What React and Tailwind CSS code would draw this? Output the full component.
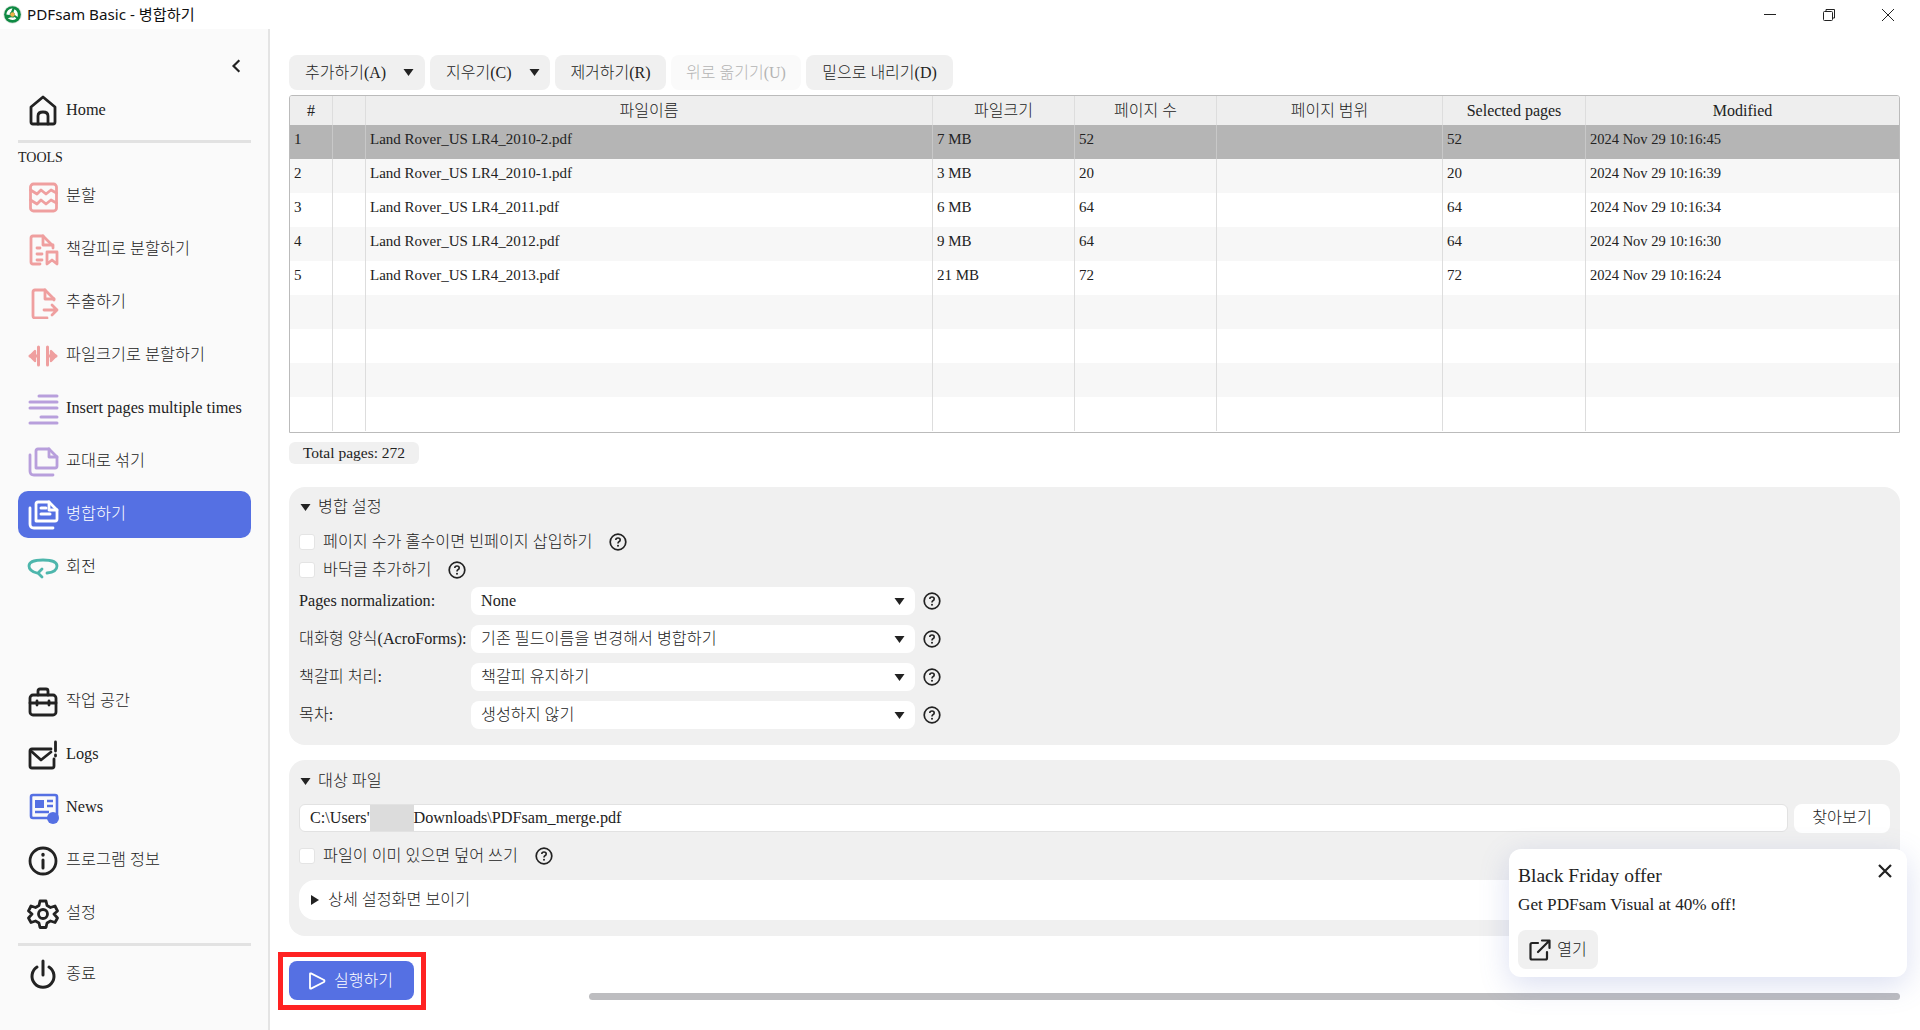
const serif = 'font-["Liberation_Serif","Noto_Sans_CJK_KR",serif]';

const pink = '#ef9f9f';
const purple = '#b89fdc';
const teal = '#4db6ac';
const blue = '#5570e3';
const dark = '#222222';

const Ico = ({ children, color = dark, w = 2.8 }) => (
  <svg viewBox="0 0 32 32" className="w-8 h-8 shrink-0" fill="none" stroke={color} strokeWidth={w} strokeLinecap="round" strokeLinejoin="round">
    {children}
  </svg>
);

const icons = {
  home: (
    <Ico>
      <path d="M16 2 L28 12 V27 Q28 29 26 29 H6 Q4 29 4 27 V12 Z" />
      <path d="M11 29 V21 Q11 17 16 17 Q21 17 21 21 V29" />
    </Ico>
  ),
  split: (
    <Ico color={pink}>
      <rect x="3.5" y="3" width="26" height="27" rx="3" />
      <path d="M3.5 9 L10 13 L14 9 L19 13 L24 9 L29.5 12" />
      <path d="M3.5 19 L10 23 L14 19 L19 23 L24 19 L29.5 22" />
    </Ico>
  ),
  bookmark: (
    <Ico color={pink}>
      <path d="M13 30 H6 Q4 30 4 28 V4 Q4 2 6 2 H16 L26 12 V14" />
      <path d="M16 2 V11 H26" />
      <path d="M10 14 H13 M10 20 H15 M10 26 H15" />
      <path d="M20 18 H30 V30 L25 26 L20 30 Z" />
    </Ico>
  ),
  extract: (
    <Ico color={pink}>
      <path d="M27 13 V12 L18 3 H8 Q6 3 6 5 V29 Q6 31 8 31 H20" />
      <path d="M18 3 V12 H27" />
      <path d="M17 23 H30 M25 18 L30 23 L25 28" />
    </Ico>
  ),
  size: (
    <svg viewBox="0 0 32 32" className="w-8 h-8 shrink-0" fill={pink} stroke={pink} strokeWidth="3" strokeLinecap="round" strokeLinejoin="round">
      <path d="M11.5 7 V25 M20.5 7 V25" fill="none" />
      <path d="M3 16 H11 M21 16 H29" fill="none" />
      <path d="M3 16 L8 11 V21 Z M29 16 L24 11 V21 Z" strokeWidth="2.4" />
    </svg>
  ),
  insert: (
    <Ico color={purple} w={3}>
      <path d="M12 3 H30 M3 9 H30 M3 15 H30 M14 24 H30 M3 30 H30" />
    </Ico>
  ),
  alternate: (
    <Ico color={purple}>
      <path d="M9 22 V5 Q9 3 11 3 H22 L30 11 V20 Q30 22 28 22 Z" />
      <path d="M22 3 V11 H30" />
      <path d="M3 9 V25 Q3 29 7 29 H26" />
    </Ico>
  ),
  merge: (
    <Ico color="#ffffff">
      <path d="M9 22 V5 Q9 3 11 3 H22 L30 11 V20 Q30 22 28 22 Z" />
      <path d="M22 3 V11 H30" />
      <path d="M3 9 V25 Q3 29 7 29 H26" />
      <path d="M14 9 H19 M14 15 H23" strokeWidth="3" />
    </Ico>
  ),
  rotate: (
    <Ico color={teal}>
      <path d="M20 21 Q30 20 30 14 Q30 8 16 8 Q2 8 2 14 Q2 19 10 21" />
      <path d="M15 17 L11 21 L15 25" />
    </Ico>
  ),
  work: (
    <Ico>
      <rect x="3" y="9" width="26" height="20" rx="3" />
      <path d="M11 9 V5 Q11 3 13 3 H19 Q21 3 21 5 V9 M3 17 H29 M10 15 V19 M22 15 V19" />
    </Ico>
  ),
  logs: (
    <Ico>
      <path d="M24 10 H5 Q3 10 3 12 V27 Q3 29 5 29 H25 Q27 29 27 27 V20" />
      <path d="M4 12 L14 21 L24 13" />
      <path d="M28.5 3 V12 M28.5 16 V17" />
    </Ico>
  ),
  news: (
    <svg viewBox="0 0 32 32" className="w-8 h-8 shrink-0" fill="none">
      <rect x="4" y="3" width="26" height="23" rx="2" stroke={blue} strokeWidth="2.6" />
      <rect x="8" y="8" width="9" height="8" fill={blue} />
      <path d="M20 9 H26 M20 14 H26 M8 20 H22" stroke={blue} strokeWidth="2.6" />
      <circle cx="26" cy="26" r="6" fill={blue} />
    </svg>
  ),
  info: (
    <Ico>
      <circle cx="16" cy="16" r="13" />
      <path d="M16 15 V23" strokeWidth="3" />
      <path d="M16 9.5 V10" strokeWidth="3.4" />
    </Ico>
  ),
  gear: (
    <Ico>
      <circle cx="16" cy="16" r="4.5" />
      <path d="M13 3 H19 L20 7.5 L23.5 9.5 L28 8 L30.5 13 L27 16 L30.5 20 L28 24.5 L23.5 23 L20 25 L19 29.5 H13 L12 25 L8.5 23 L4 24.5 L1.5 20 L5 16 L1.5 13 L4 8 L8.5 9.5 L12 7.5 Z" />
    </Ico>
  ),
  power: (
    <Ico w={3}>
      <path d="M16 2 V16" />
      <path d="M10 8 A11 11 0 1 0 22 8" />
    </Ico>
  ),
};

const toolItems = [
  ['split', '분할'],
  ['bookmark', '책갈피로 분할하기'],
  ['extract', '추출하기'],
  ['size', '파일크기로 분할하기'],
  ['insert', 'Insert pages multiple times'],
  ['alternate', '교대로 섞기'],
  ['merge', '병합하기', true],
  ['rotate', '회전'],
];

const bottomItems = [
  ['work', '작업 공간'],
  ['logs', 'Logs'],
  ['news', 'News'],
  ['info', '프로그램 정보'],
  ['gear', '설정'],
];

const columns = ['#', '', '파일이름', '파일크기', '페이지 수', '페이지 범위', 'Selected pages', 'Modified'];

const files = [
  ['1', 'Land Rover_US LR4_2010-2.pdf', '7 MB', '52', '2024 Nov 29 10:16:45'],
  ['2', 'Land Rover_US LR4_2010-1.pdf', '3 MB', '20', '2024 Nov 29 10:16:39'],
  ['3', 'Land Rover_US LR4_2011.pdf', '6 MB', '64', '2024 Nov 29 10:16:34'],
  ['4', 'Land Rover_US LR4_2012.pdf', '9 MB', '64', '2024 Nov 29 10:16:30'],
  ['5', 'Land Rover_US LR4_2013.pdf', '21 MB', '72', '2024 Nov 29 10:16:24'],
];

const gridCols = 'grid grid-cols-[43px_33px_567px_142px_142px_226px_143px_1fr]';

const Logo = () => (
  <svg viewBox="0 0 20 20" className="w-[19px] h-[19px] shrink-0">
    <circle cx="10" cy="10" r="9.8" fill="#dfe5e0" />
    <circle cx="10" cy="10" r="8.8" fill="#0f8a43" />
    <path d="M3.5 10 Q4 4.5 10 3.5 L8.5 7 Q6.8 8 7 10.5 Z" fill="#ffffff" />
    <path d="M12 4.5 Q16.5 7 15.5 12.5 L12.5 10.5 Q12.8 8.5 11 7.5 Z" fill="#ffffff" />
    <path d="M14 14.5 Q9.5 17.5 5 14 L8.5 12.8 Q10.5 13.8 12.5 12.5 Z" fill="#ffffff" />
    <circle cx="10" cy="10" r="2.4" fill="#f2b04a" />
  </svg>
);

const Caret = ({ className = '' }) => (
  <svg viewBox="0 0 10 7" className={`w-[11px] h-[7px] shrink-0 ${className}`}>
    <path d="M0 0 H10 L5 7 Z" fill="#222222" />
  </svg>
);

const CaretRight = () => (
  <svg viewBox="0 0 8 10" className="w-2 h-[10px] shrink-0">
    <path d="M0 0 L8 5 L0 10 Z" fill="#222222" />
  </svg>
);

const Help = () => (
  <svg viewBox="0 0 18 18" className="w-[18px] h-[18px] shrink-0" fill="none">
    <circle cx="9" cy="9" r="7.8" stroke="#222222" strokeWidth="1.7" />
    <path d="M6.8 7 Q6.8 5 9 5 Q11.2 5 11.2 6.9 Q11.2 8 9.9 8.7 Q9 9.2 9 10.6" stroke="#222222" strokeWidth="1.6" />
    <circle cx="9" cy="12.8" r="1" fill="#222222" />
  </svg>
);

const Checkbox = () => (
  <span className="w-4 h-4 rounded-[3px] bg-white border border-[#e4e4e4] shrink-0" />
);

const NavRow = ({ icon, label, active }) => (
  <div className="h-[53px] py-[3px]">
    <div className={`h-[47px] flex items-center pl-[9px] gap-[7px] rounded-[10px] text-[16.3px] ${active ? 'bg-[#5570e3] text-white' : 'text-[#222222]'}`}>
      {icons[icon]}
      <span className="whitespace-nowrap">{label}</span>
    </div>
  </div>
);

const ToolButton = ({ children, className = '', disabled }) => (
  <div className={`h-[35px] rounded-lg flex items-center text-[16px] ${disabled ? 'bg-[#fafafa] text-[#b4b4b4]' : 'bg-[#f0f0f0] text-[#222222]'} ${className}`}>
    {children}
  </div>
);

const Select = ({ label, value }) => (
  <div className="flex items-center h-7 mb-[10px]">
    <span className="w-[172px] whitespace-nowrap">{label}</span>
    <div className="w-[444px] h-7 bg-white rounded-lg flex items-center justify-between pl-[10px] pr-[10px]">
      <span>{value}</span>
      <Caret />
    </div>
    <span className="ml-2"><Help /></span>
  </div>
);

export default function App() {
  return (
    <div className={`h-screen flex flex-col bg-white text-[#222222] font-light overflow-hidden ${serif}`}>
      {/* window title bar */}
      <div className="h-[29px] shrink-0 flex items-center pl-[3px] pr-[3px]">
        <Logo />
        <span className="ml-[5px] pb-px text-[15.2px] font-normal font-['Noto_Sans','Noto_Sans_CJK_KR',sans-serif] text-[#111111]">PDFsam Basic - 병합하기</span>
        <div className="ml-auto flex items-center">
          <div className="w-[58px] h-[29px] flex items-center justify-center">
            <span className="w-3 h-px bg-[#222222]" />
          </div>
          <div className="w-[59px] h-[29px] flex items-center justify-center">
            <svg viewBox="0 0 12 12" className="w-3 h-3" fill="none" stroke="#222222">
              <rect x="0.5" y="2.5" width="9" height="9" rx="1" />
              <path d="M3 2.5 V0.5 H11.5 V9 H9.5" />
            </svg>
          </div>
          <div className="w-[59px] h-[29px] flex items-center justify-center">
            <svg viewBox="0 0 12 12" className="w-3 h-3" fill="none" stroke="#222222">
              <path d="M0 0 L12 12 M12 0 L0 12" />
            </svg>
          </div>
        </div>
      </div>

      <div className="flex-1 flex min-h-0">
        {/* sidebar */}
        <aside className="w-[270px] shrink-0 bg-[#fafafa] border-r-2 border-[#e4e4e4] flex flex-col pl-[18px] pr-[17px] pb-[29px]">
          <div className="h-[55px] pt-[19px] flex items-center justify-end pr-[10px]">
            <svg viewBox="0 0 12 16" className="w-[10px] h-[14px]" fill="none" stroke="#222222" strokeWidth="2.6">
              <path d="M10 1 L3 8 L10 15" />
            </svg>
          </div>
          <NavRow icon="home" label="Home" />
          <div className="h-[3px] bg-[#e2e2e2] mt-[3px]" />
          <div className="h-[25px] mb-[2px] flex items-end text-[14px] leading-[20px]">TOOLS</div>
          <div>
            {toolItems.map(([icon, label, active]) => (
              <NavRow key={icon} icon={icon} label={label} active={active} />
            ))}
          </div>
          <div className="mt-auto">
            {bottomItems.map(([icon, label]) => (
              <NavRow key={icon} icon={icon} label={label} />
            ))}
            <div className="h-[3px] bg-[#e2e2e2] mt-[3px] mb-[2px]" />
            <NavRow icon="power" label="종료" />
          </div>
        </aside>

        {/* main content */}
        <main className="flex-1 min-w-0 flex flex-col pl-[19px] pr-5 pt-[26px]">
          <div className="flex gap-[5px]">
            <ToolButton className="w-[136px] pl-4 gap-[17px]">추가하기(A)<Caret /></ToolButton>
            <ToolButton className="w-[120px] pl-4 gap-[17px]">지우기(C)<Caret /></ToolButton>
            <ToolButton className="w-[111px] justify-center">제거하기(R)</ToolButton>
            <ToolButton className="w-[130px] justify-center" disabled>위로 옮기기(U)</ToolButton>
            <ToolButton className="w-[147px] justify-center">밑으로 내리기(D)</ToolButton>
          </div>

          <div className="mt-[5px] h-[338px] border border-[#bbbbbb] rounded-t-[3px] overflow-hidden bg-white text-[15px]">
            <div className={`${gridCols} h-[29px] bg-[#eeeeee] text-[16px]`}>
              {columns.map((col, i) => (
                <div key={i} className="border-r border-[#dddddd] last:border-r-0 flex items-center justify-center pt-px">
                  {col}
                </div>
              ))}
            </div>
            {Array.from({ length: 9 }).map((_, i) => {
              const row = files[i];
              const bg = i === 0 ? 'bg-[#b5b5b5]' : i % 2 === 1 ? 'bg-[#f7f7f7]' : 'bg-white';
              const cells = row ? [row[0], '', row[1], row[2], row[3], '', row[3], row[4]] : Array(8).fill('');
              return (
                <div key={i} className={`${gridCols} h-[34px] ${bg}`}>
                  {cells.map((cell, j) => (
                    <div key={j} className={`border-r last:border-r-0 flex items-center pl-[4px] pb-[5px] last:pb-[4px] whitespace-nowrap last:text-[14.5px] ${i === 0 ? 'border-[#c8c8c8]' : 'border-[#dddddd]'}`}>
                      {cell}
                    </div>
                  ))}
                </div>
              );
            })}
          </div>

          <div className="mt-[9px] self-start w-[130px] h-[22px] rounded-md bg-[#f0f0f0] flex items-center justify-center text-[15.5px]">
            Total pages: 272
          </div>

          {/* merge settings */}
          <section className="mt-[23px] h-[258px] rounded-2xl bg-[#f0f0f0] px-[10px] pt-[2px] text-[16.2px]">
            <div className="h-9 flex items-center gap-[7px]">
              <Caret className="ml-[1px]" />
              <span>병합 설정</span>
            </div>
            <div className="mt-[3px] h-7 flex items-center">
              <Checkbox />
              <span className="ml-2">페이지 수가 홀수이면 빈페이지 삽입하기</span>
              <span className="ml-[17px]"><Help /></span>
            </div>
            <div className="h-7 flex items-center">
              <Checkbox />
              <span className="ml-2">바닥글 추가하기</span>
              <span className="ml-[17px]"><Help /></span>
            </div>
            <div className="mt-[3px]">
              <Select label="Pages normalization:" value="None" />
              <Select label="대화형 양식(AcroForms):" value="기존 필드이름을 변경해서 병합하기" />
              <Select label="책갈피 처리:" value="책갈피 유지하기" />
              <Select label="목차:" value="생성하지 않기" />
            </div>
          </section>

          {/* destination file */}
          <section className="mt-[15px] h-[176px] rounded-2xl bg-[#f0f0f0] px-[10px] text-[16.2px]">
            <div className="h-[38px] pt-1 flex items-center gap-[7px]">
              <Caret className="ml-[1px]" />
              <span>대상 파일</span>
            </div>
            <div className="mt-[6px] flex gap-[6px]">
              <div className="flex-1 h-7 bg-white border border-[#e2e2e2] rounded-md flex items-stretch pl-[10px] overflow-hidden">
                <span className="self-center">C:\Users'</span>
                <span className="w-[44px] bg-[#dcdcdc]" />
                <span className="self-center">Downloads\PDFsam_merge.pdf</span>
              </div>
              <div className="w-[96px] h-[29px] bg-white rounded-lg flex items-center justify-center">찾아보기</div>
            </div>
            <div className="mt-[11px] h-6 flex items-center">
              <Checkbox />
              <span className="ml-2">파일이 이미 있으면 덮어 쓰기</span>
              <span className="ml-[17px]"><Help /></span>
            </div>
            <div className="mt-3 h-10 bg-white rounded-2xl flex items-center pl-3 gap-[9px]">
              <CaretRight />
              <span>상세 설정화면 보이기</span>
            </div>
          </section>

          {/* footer */}
          <div className="mt-[25px] flex items-end">
            <div className="relative">
              <button className="w-[125px] h-[39px] pr-[2px] rounded-lg bg-[#5570e3] text-white text-[16px] font-light flex items-center justify-center gap-2">
                <svg viewBox="0 0 18 18" className="w-[18px] h-[18px]" fill="none" stroke="#ffffff" strokeWidth="1.8" strokeLinejoin="round">
                  <path d="M2 2 Q2 1 3 1.4 L16 8 Q17 9 16 10 L3 16.6 Q2 17 2 16 Z" />
                </svg>
                실행하기
              </button>
              {/* red annotation round the run button */}
              <div className="absolute -left-[11px] -right-3 -top-[9px] -bottom-[10px] border-[5px] border-[#ff2222]" />
            </div>
            <div className="ml-[175px] flex-1 h-[7px] rounded-sm bg-[#bdbdc0]" />
          </div>
        </main>
      </div>

      {/* offer notification */}
      <div className="absolute left-[1509px] top-[849px] w-[398px] h-[128px] bg-white rounded-xl shadow-[0_8px_30px_rgba(90,110,190,0.22)] pl-[9px] pt-[16px]">
        <div className="text-[19.5px] leading-[22px]">Black Friday offer</div>
        <div className="mt-[7px] text-[17.2px] leading-[22px]">Get PDFsam Visual at 40% off!</div>
        <div className="mt-[14px] w-20 h-[39px] rounded-lg bg-[#f0f0f0] flex items-center justify-center gap-[6px] text-[16px]">
          <svg viewBox="0 0 22 22" className="w-[22px] h-[22px]" fill="none" stroke="#222222" strokeWidth="2.2" strokeLinejoin="round" strokeLinecap="round">
            <path d="M9 4 H3 Q1.5 4 1.5 5.5 V19 Q1.5 20.5 3 20.5 H16.5 Q18 20.5 18 19 V13" />
            <path d="M9 13 L20 2 M13 1.5 H20.5 V9" />
          </svg>
          열기
        </div>
        <svg viewBox="0 0 14 14" className="absolute right-[15px] top-[15px] w-[14px] h-[14px]" fill="none" stroke="#222222" strokeWidth="2.2">
          <path d="M1 1 L13 13 M13 1 L1 13" />
        </svg>
      </div>
    </div>
  );
}
